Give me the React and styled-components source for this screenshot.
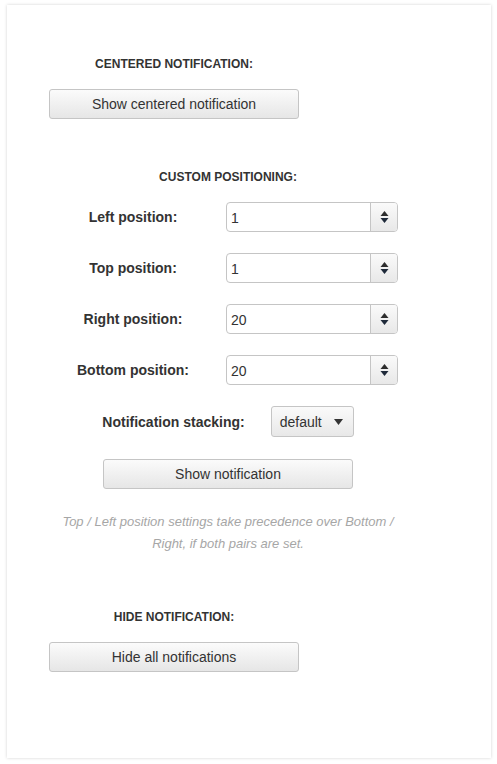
import styled, { createGlobalStyle } from "styled-components";

const GlobalStyle = createGlobalStyle`
  body {
    margin: 0;
    background: #ffffff;
    font-family: 'Liberation Sans', Arial, sans-serif;
    color: #333333;
  }
`;

const positions = [
  { label: "Left position:", value: "1" },
  { label: "Top position:", value: "1" },
  { label: "Right position:", value: "20" },
  { label: "Bottom position:", value: "20" },
];

export default function App() {
  return (
    <Page>
      <GlobalStyle />
      <Card>
        <Section>
          <Heading>Centered notification:</Heading>
          <Button>Show centered notification</Button>
        </Section>

        <WideSection $top={48}>
          <Heading>Custom positioning:</Heading>
          <Rows>
            {positions.map((p) => (
              <PositionRow key={p.label}>
                <Label>{p.label}</Label>
                <Spinner>
                  <SpinnerValue>{p.value}</SpinnerValue>
                  <SpinnerArrows>
                    <svg width="9" height="14" viewBox="0 0 9 14">
                      <path d="M4.5 1 L8.5 6 L0.5 6 Z" fill="#2d2d2d" />
                      <path d="M0.5 8 L8.5 8 L4.5 13 Z" fill="#1f2a3a" />
                    </svg>
                  </SpinnerArrows>
                </Spinner>
              </PositionRow>
            ))}
          </Rows>
          <StackRow>
            <Label>Notification stacking:</Label>
            <Select>
              default
              <svg width="9" height="6" viewBox="0 0 9 6">
                <path d="M0 0 L9 0 L4.5 6 Z" fill="#333" />
              </svg>
            </Select>
          </StackRow>
          <Button>Show notification</Button>
          <Note>
            Top / Left position settings take precedence over Bottom / Right, if
            both pairs are set.
          </Note>
        </WideSection>

        <Section $top={52}>
          <Heading>Hide notification:</Heading>
          <Button>Hide all notifications</Button>
        </Section>
      </Card>
    </Page>
  );
}

const Page = styled.div`
  padding: 5px 6px 6px 7px;
`;

const Card = styled.div`
  background: #ffffff;
  box-shadow: 0 0 3px rgba(0, 0, 0, 0.18);
  padding: 49px 42px 86px;
  min-height: 752px;
  box-sizing: border-box;
`;

const Section = styled.div`
  width: 250px;
  margin-top: ${(p) => p.$top || 0}px;
  display: flex;
  flex-direction: column;
  align-items: center;
  gap: 15px;
`;

const WideSection = styled.div`
  width: 358px;
  margin-top: ${(p) => p.$top || 0}px;
  display: flex;
  flex-direction: column;
  align-items: center;
`;

const Heading = styled.h3`
  margin: 0;
  font-size: 12px;
  line-height: 20px;
  font-weight: bold;
  text-transform: uppercase;
  color: #333333;
`;

const Button = styled.button`
  width: 250px;
  height: 30px;
  border: 1px solid #c5c5c5;
  border-radius: 3px;
  background: linear-gradient(to bottom, #fbfbfb, #e6e6e6);
  font-family: 'Liberation Sans', Arial, sans-serif;
  font-size: 14px;
  color: #333333;
  cursor: pointer;
  padding: 0;
  ${WideSection} & {
    margin-top: 22px;
  }
`;

const Rows = styled.div`
  align-self: flex-start;
  margin-top: 15px;
  display: flex;
  flex-direction: column;
  gap: 21px;
`;

const PositionRow = styled.div`
  display: grid;
  grid-template-columns: 168px 172px;
  column-gap: 9px;
  align-items: center;
`;

const Label = styled.label`
  font-size: 14px;
  font-weight: bold;
  color: #333333;
  text-align: center;
`;

const Spinner = styled.div`
  height: 30px;
  box-sizing: border-box;
  border: 1px solid #c5c5c5;
  border-radius: 4px;
  display: flex;
  overflow: hidden;
  background: #ffffff;
`;

const SpinnerValue = styled.span`
  flex: 1;
  display: flex;
  align-items: center;
  padding-left: 4px;
  padding-top: 2px;
  font-size: 14px;
  color: #333333;
`;

const SpinnerArrows = styled.span`
  width: 26px;
  border-left: 1px solid #c5c5c5;
  background: linear-gradient(to bottom, #fafafa, #e8e8e8);
  display: flex;
  align-items: center;
  justify-content: center;
`;

const StackRow = styled.div`
  margin-top: 21px;
  display: flex;
  align-items: center;
  gap: 26px;
`;

const Select = styled.div`
  width: 83px;
  height: 31px;
  box-sizing: border-box;
  border: 1px solid #c5c5c5;
  border-radius: 3px;
  background: linear-gradient(to bottom, #fafafa, #e8e8e8);
  display: flex;
  align-items: center;
  justify-content: space-between;
  padding: 0 10px 0 8px;
  font-size: 14px;
  color: #333333;
`;

const Note = styled.p`
  margin: 22px 0 0;
  width: 358px;
  text-align: center;
  font-size: 13px;
  line-height: 22px;
  font-style: italic;
  color: #a6a6a6;
`;
